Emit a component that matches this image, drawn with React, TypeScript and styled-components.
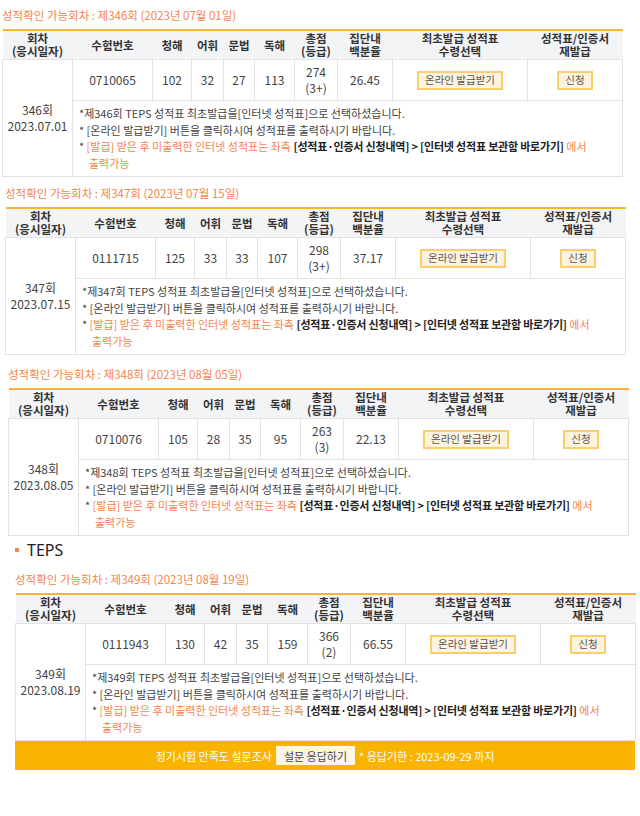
import React from "react";
import styled, { createGlobalStyle } from "styled-components";

const Global = createGlobalStyle`
  html, body { margin: 0; padding: 0; background: #fff; }
  body { font-family: "Noto Sans CJK KR", "Noto Sans", sans-serif; color: #444; width: 640px; overflow: hidden; }
`;

const Page = styled.div`
  width: 640px;
  display: flex;
  flex-direction: column;
`;

const Block = styled.section<{ $left: number; $top: number }>`
  margin-left: ${(p) => p.$left}px;
  margin-top: ${(p) => p.$top}px;
  width: 620px;
  display: flex;
  flex-direction: column;
`;

const Title = styled.div`
  font-size: 11.5px;
  line-height: 14px;
  height: 14px;
  color: #f5844f;
  margin-bottom: 7px;
  white-space: nowrap;
`;

const Heading = styled.div`
  margin-left: 15px;
  margin-top: 4px;
  display: flex;
  align-items: center;
  gap: 8px;
  font-size: 16px;
  line-height: 20px;
  color: #222;
  font-family: "Noto Sans", "Noto Sans CJK KR", sans-serif;
`;

const Bullet = styled.span`
  width: 4px;
  height: 4px;
  background: #f5844f;
`;

const Table = styled.table`
  width: 620px;
  border-collapse: collapse;
  table-layout: fixed;
  border-top: 2px solid #f6b530;
  font-size: 12px;
`;

const Th = styled.th`
  background: #f3f4f6;
  color: #333;
  font-weight: 700;
  font-size: 11.5px;
  line-height: 13px;
  height: 28px;
  padding: 0;
  text-align: center;
  vertical-align: middle;
  border-bottom: 1px solid #e2e2e2;
  white-space: nowrap;
`;

const Td = styled.td`
  border: 1px solid #e2e2e2;
  border-top: none;
  text-align: center;
  vertical-align: middle;
  padding: 0;
  height: 40px;
  line-height: 16px;
  color: #444;
  font-size: 12px;
`;

const NoteCell = styled.td`
  border: 1px solid #e2e2e2;
  border-top: none;
  padding: 4px 0 5px 6px;
  height: 66px;
  vertical-align: top;
  text-align: left;
  font-size: 11px;
  line-height: 16.5px;
  color: #444;
`;

const NoteLine = styled.div<{ $tone?: "orange" }>`
  color: ${(p) => (p.$tone === "orange" ? "#f5844f" : "#444")};
  white-space: nowrap;
`;

const Star = styled.span`
  color: #444;
`;

const Indent = styled.span`
  display: inline-block;
  padding-left: 10px;
`;

const Strong = styled.b`
  color: #222;
  font-weight: 700;
  letter-spacing: -0.2px;
`;

const Btn = styled.button`
  font-family: inherit;
  font-size: 10.5px;
  color: #555;
  background: #fdf3df;
  border: 2px solid #f8cf6a;
  height: 19px;
  line-height: 14px;
  padding: 0 6px;
  cursor: pointer;
`;

const Banner = styled.div`
  width: 620px;
  height: 29px;
  background: #f9b400;
  display: flex;
  align-items: center;
  justify-content: center;
  gap: 4px;
  color: #fff;
  font-size: 11px;
`;

const BannerBtn = styled.button`
  font-family: inherit;
  font-size: 11px;
  color: #444;
  background: #fdf6e6;
  border: none;
  height: 19px;
  padding: 0 8px;
`;

type Row = {
  round: string;
  title: string;
  date: string;
  id: string;
  l: number;
  v: number;
  g: number;
  r: number;
  total: number;
  grade: string;
  pct: string;
};

const cols = [70, 80, 39, 32, 31, 40, 43, 55, 135, 95];

const ScoreTable: React.FC<{ row: Row }> = ({ row }) => (
  <Table>
    <colgroup>
      {cols.map((w, i) => (
        <col key={i} style={{ width: w }} />
      ))}
    </colgroup>
    <thead>
      <tr>
        <Th>
          회차
          <br />
          (응시일자)
        </Th>
        <Th>수험번호</Th>
        <Th>청해</Th>
        <Th>어휘</Th>
        <Th>문법</Th>
        <Th>독해</Th>
        <Th>
          총점
          <br />
          (등급)
        </Th>
        <Th>
          집단내
          <br />
          백분율
        </Th>
        <Th>
          최초발급 성적표
          <br />
          수령선택
        </Th>
        <Th>
          성적표/인증서
          <br />
          재발급
        </Th>
      </tr>
    </thead>
    <tbody>
      <tr>
        <Td rowSpan={2}>
          {row.round}회
          <br />
          {row.date}
        </Td>
        <Td>{row.id}</Td>
        <Td>{row.l}</Td>
        <Td>{row.v}</Td>
        <Td>{row.g}</Td>
        <Td>{row.r}</Td>
        <Td>
          {row.total}
          <br />({row.grade})
        </Td>
        <Td>{row.pct}</Td>
        <Td>
          <Btn>온라인 발급받기</Btn>
        </Td>
        <Td>
          <Btn>신청</Btn>
        </Td>
      </tr>
      <tr>
        <NoteCell colSpan={9}>
          <NoteLine>
            *제{row.round}회 TEPS 성적표 최초발급을[인터넷 성적표]으로 선택하셨습니다.
          </NoteLine>
          <NoteLine>* [온라인 발급받기] 버튼을 클릭하시여 성적표를 출력하시기 바랍니다.</NoteLine>
          <NoteLine $tone="orange">
            <Star>*</Star> [발급] 받은 후 미출력한 인터넷 성적표는 좌측{" "}
            <Strong>[성적표·인증서 신청내역] &gt; [인터넷 성적표 보관함 바로가기]</Strong> 에서
          </NoteLine>
          <NoteLine $tone="orange">
            <Indent>출력가능</Indent>
          </NoteLine>
        </NoteCell>
      </tr>
    </tbody>
  </Table>
);

const rows: (Row & { left: number; top: number })[] = [
  { round: "346", title: "2023년 07월 01일", date: "2023.07.01", id: "0710065", l: 102, v: 32, g: 27, r: 113, total: 274, grade: "3+", pct: "26.45", left: 2, top: 8 },
  { round: "347", title: "2023년 07월 15일", date: "2023.07.15", id: "0111715", l: 125, v: 33, g: 33, r: 107, total: 298, grade: "3+", pct: "37.17", left: 5, top: 9 },
  { round: "348", title: "2023년 08월 05일", date: "2023.08.05", id: "0710076", l: 105, v: 28, g: 35, r: 95, total: 263, grade: "3", pct: "22.13", left: 8, top: 12 },
];

const last: Row = { round: "349", title: "2023년 08월 19일", date: "2023.08.19", id: "0111943", l: 130, v: 42, g: 35, r: 159, total: 366, grade: "2", pct: "66.55" };

export default function App() {
  return (
    <Page>
      <Global />
      {rows.map((r) => (
        <Block key={r.round} $left={r.left} $top={r.top}>
          <Title>
            성적확인 가능회차 : 제{r.round}회 ({r.title})
          </Title>
          <ScoreTable row={r} />
        </Block>
      ))}
      <Heading>
        <Bullet />
        TEPS
      </Heading>
      <Block $left={15} $top={12}>
        <Title>
          성적확인 가능회차 : 제{last.round}회 ({last.title})
        </Title>
        <ScoreTable row={last} />
        <Banner>
          정기시험 만족도 설문조사 <BannerBtn>설문 응답하기</BannerBtn> * 응답기한 : 2023-09-29 까지
        </Banner>
      </Block>
    </Page>
  );
}
